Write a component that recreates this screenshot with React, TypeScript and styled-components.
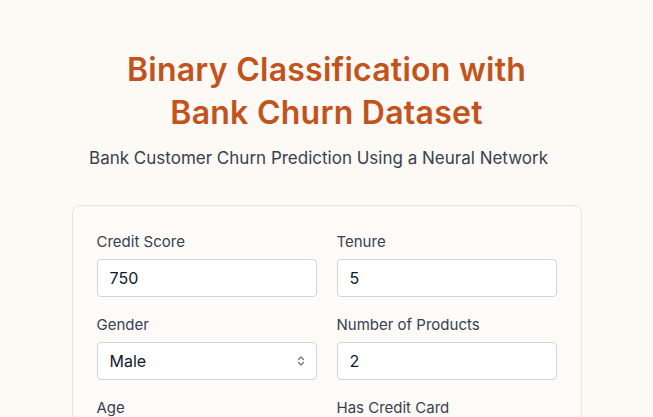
import React from "react";
import styled, { createGlobalStyle } from "styled-components";

const Global = createGlobalStyle`
  html, body { margin: 0; padding: 0; background: #fdf9f4; }
  body { font-family: Inter, "Noto Sans", sans-serif; -webkit-font-smoothing: antialiased; }
  * { box-sizing: border-box; }
`;

const Page = styled.main`
  min-height: 417px;
  padding: 48px 0 0;
  display: flex;
  flex-direction: column;
  align-items: center;
`;

const Title = styled.h1`
  margin: 0;
  font-size: 32px;
  line-height: 43px;
  font-weight: 600;
  color: #c2531c;
  text-align: center;
  letter-spacing: 0.25px;
`;

const Subtitle = styled.p`
  margin: 12px 16px 0 0;
  font-size: 17px;
  line-height: 24px;
  color: #374151;
  text-align: center;
`;

const Card = styled.form`
  margin-top: 35px;
  width: 510px;
  background: #fdfaf7;
  border: 1px solid #e8e4de;
  border-radius: 8px;
  padding: 25px 24px 24px;
  display: grid;
  grid-template-columns: minmax(0, 1fr) minmax(0, 1fr);
  column-gap: 20px;
  row-gap: 17px;
`;

const Field = styled.div`
  display: flex;
  flex-direction: column;
  gap: 6px;
  min-width: 0;
`;

const Label = styled.label`
  font-size: 15px;
  line-height: 22px;
  color: #374151;
`;

const Input = styled.input`
  width: 100%;
  height: 38px;
  border: 1px solid #d1d5db;
  border-radius: 4px;
  background: #fff;
  padding: 0 12px;
  font-family: inherit;
  font-size: 16px;
  color: #111827;
  outline: none;
`;

const SelectWrap = styled.div`
  position: relative;
  height: 38px;
`;

const Select = styled.select`
  appearance: none;
  width: 100%;
  height: 38px;
  border: 1px solid #d1d5db;
  border-radius: 4px;
  background: #fff;
  padding: 0 12px;
  font-family: inherit;
  font-size: 16px;
  color: #111827;
  outline: none;
`;

const Chevron = styled.svg`
  position: absolute;
  right: 12px;
  top: 13px;
  pointer-events: none;
`;

export default function App() {
  return (
    <>
      <Global />
      <Page>
        <Title>
          Binary Classification with
          <br />
          Bank Churn Dataset
        </Title>
        <Subtitle>Bank Customer Churn Prediction Using a Neural Network</Subtitle>
        <Card>
          <Field>
            <Label>Credit Score</Label>
            <Input defaultValue="750" />
          </Field>
          <Field>
            <Label>Tenure</Label>
            <Input defaultValue="5" />
          </Field>
          <Field>
            <Label>Gender</Label>
            <SelectWrap>
              <Select defaultValue="Male">
                <option>Male</option>
                <option>Female</option>
              </Select>
              <Chevron width="8" height="12" viewBox="0 0 8 12">
                <path d="M1.5 4.5 L4 2 L6.5 4.5 M1.5 7.5 L4 10 L6.5 7.5" fill="none" stroke="#6b7280" strokeWidth="1.2" strokeLinecap="round" strokeLinejoin="round" />
              </Chevron>
            </SelectWrap>
          </Field>
          <Field>
            <Label>Number of Products</Label>
            <Input defaultValue="2" />
          </Field>
          <Field>
            <Label>Age</Label>
            <Input defaultValue="42" />
          </Field>
          <Field>
            <Label>Has Credit Card</Label>
            <Input defaultValue="1" />
          </Field>
        </Card>
      </Page>
    </>
  );
}
